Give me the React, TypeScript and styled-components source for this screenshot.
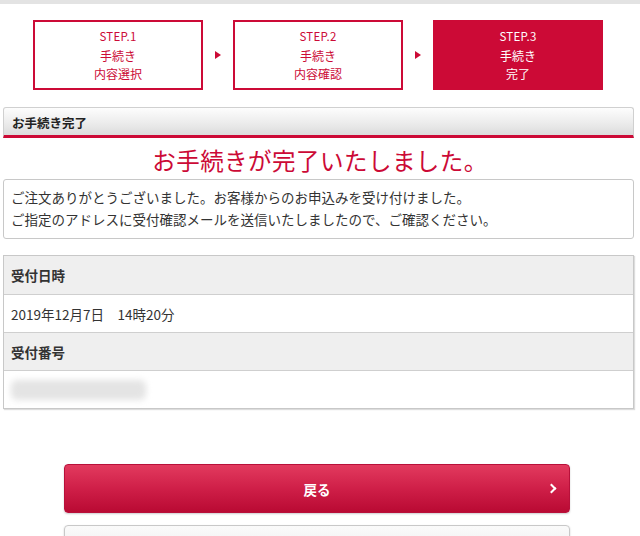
import React from "react";
import styled, { createGlobalStyle } from "styled-components";

const red = "#cc0a36";
const jp = `"Noto Sans CJK JP", "Noto Sans", sans-serif`;

const GlobalStyle = createGlobalStyle`
  body {
    margin: 0;
    background: #fff;
    font-family: ${jp};
    color: #333;
  }
`;

const Page = styled.div`
  width: 640px;
  height: 536px;
  overflow: hidden;
  border-top: 4px solid #e3e3e3;
  box-sizing: border-box;
`;

const Steps = styled.div`
  display: flex;
  align-items: center;
  padding: 16px 0 0 33px;
`;

const StepBox = styled.div<{ $active?: boolean }>`
  width: 170px;
  height: 70px;
  box-sizing: border-box;
  border: 2px solid ${red};
  background: ${(p) => (p.$active ? red : "#fff")};
  color: ${(p) => (p.$active ? "#fff" : red)};
  display: flex;
  flex-direction: column;
  align-items: center;
  padding-top: 6px;
`;

const StepLabel = styled.div`
  font-size: 11.5px;
  line-height: 16px;
  letter-spacing: 0.02em;
`;

const StepName = styled.div`
  font-size: 12px;
  line-height: 18px;
  margin-top: 3px;
  text-align: center;
`;

const Arrow = styled.div`
  width: 30px;
  display: flex;
  justify-content: center;
  &::after {
    content: "";
    border-left: 6px solid ${red};
    border-top: 4px solid transparent;
    border-bottom: 4px solid transparent;
  }
`;

const SectionHead = styled.div`
  margin: 17px 6px 0 3px;
  height: 31px;
  box-sizing: border-box;
  border: 1px solid #d0d0d0;
  border-bottom: 3px solid ${red};
  border-radius: 3px 3px 0 0;
  background: linear-gradient(#fdfdfd, #ececec 55%, #dcdcdc);
  font-size: 12.5px;
  font-weight: bold;
  color: #222;
  padding: 5px 0 0 8px;
`;

const Title = styled.h1`
  margin: 7px 0 0;
  text-align: center;
  font-size: 23.5px;
  line-height: 31px;
  font-weight: normal;
  color: ${red};
  letter-spacing: 0.02em;
`;

const Message = styled.div`
  margin: 3px 6px 0 3px;
  border: 1px solid #c8c8c8;
  border-radius: 3px;
  padding: 6px 7px 8px 7px;
  font-size: 13.5px;
  line-height: 22px;
  color: #333;
`;

const Table = styled.div`
  margin: 16px 6px 0 3px;
  border: 1px solid #c8c8c8;
  box-shadow: 1px 1px 1px #ddd;
`;

const Row = styled.div<{ $head?: boolean }>`
  height: 38px;
  box-sizing: border-box;
  display: flex;
  align-items: center;
  padding-left: 7px;
  font-size: 13.5px;
  font-weight: ${(p) => (p.$head ? "bold" : "normal")};
  background: ${(p) => (p.$head ? "#efefef" : "#fff")};
  border-top: 1px solid #cfcfcf;
  &:first-child {
    border-top: none;
  }
`;

const Blurred = styled.div`
  width: 135px;
  height: 20px;
  background: #e4e4e4;
  border-radius: 6px;
  filter: blur(3px);
`;

const Buttons = styled.div`
  margin-top: 55px;
  padding: 0 70px 0 64px;
  display: flex;
  flex-direction: column;
  gap: 12px;
`;

const Button = styled.div<{ $primary?: boolean }>`
  position: relative;
  height: 47px;
  border-radius: 4px;
  display: flex;
  align-items: center;
  justify-content: center;
  font-size: 13.5px;
  font-weight: bold;
  color: ${(p) => (p.$primary ? "#fff" : "#333")};
  background: ${(p) =>
    p.$primary
      ? "linear-gradient(#e23a5e, #cf1f48 50%, #b90a33)"
      : "linear-gradient(#fafafa, #e8e8e8)"};
  border: 1px solid ${(p) => (p.$primary ? "#b8103a" : "#c8c8c8")};
  box-shadow: 0 1px 2px rgba(0, 0, 0, 0.2);
`;

const Chevron = styled.span`
  position: absolute;
  right: 14px;
  top: 50%;
  width: 5px;
  height: 5px;
  margin-top: -4px;
  border-top: 2px solid #fff;
  border-right: 2px solid #fff;
  transform: rotate(45deg);
`;

export default function App() {
  return (
    <>
      <GlobalStyle />
      <Page>
        <Steps>
          <StepBox>
            <StepLabel>STEP.1</StepLabel>
            <StepName>
              手続き
              <br />
              内容選択
            </StepName>
          </StepBox>
          <Arrow />
          <StepBox>
            <StepLabel>STEP.2</StepLabel>
            <StepName>
              手続き
              <br />
              内容確認
            </StepName>
          </StepBox>
          <Arrow />
          <StepBox $active>
            <StepLabel>STEP.3</StepLabel>
            <StepName>
              手続き
              <br />
              完了
            </StepName>
          </StepBox>
        </Steps>

        <SectionHead>お手続き完了</SectionHead>
        <Title>お手続きが完了いたしました。</Title>
        <Message>
          ご注文ありがとうございました。お客様からのお申込みを受け付けました。
          <br />
          ご指定のアドレスに受付確認メールを送信いたしましたので、ご確認ください。
        </Message>

        <Table>
          <Row $head>受付日時</Row>
          <Row>2019年12月7日　14時20分</Row>
          <Row $head>受付番号</Row>
          <Row>
            <Blurred />
          </Row>
        </Table>

        <Buttons>
          <Button $primary>
            戻る
            <Chevron />
          </Button>
          <Button>トップへ</Button>
        </Buttons>
      </Page>
    </>
  );
}
